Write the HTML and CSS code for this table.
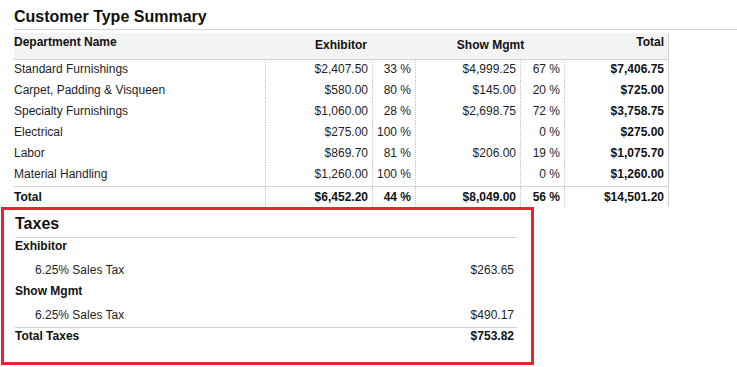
FILE: index.html
```html
<!DOCTYPE html>
<html lang="en">
<head>
<meta charset="utf-8">
<title>Customer Type Summary</title>
<link rel="stylesheet" href="styles.css">
</head>
<body>
<div class="page">
  <h2 class="title">Customer Type Summary</h2>
  <div class="summary">
    <div class="row head">
      <div class="cell h-top">Department Name</div>
      <div class="cell h-mid span2">Exhibitor</div>
      <div class="cell h-mid span2">Show Mgmt</div>
      <div class="cell h-top num last">Total</div>
    </div>
    <div class="row">
      <div class="cell name">Standard Furnishings</div>
      <div class="cell num">$2,407.50</div>
      <div class="cell num">33 %</div>
      <div class="cell num">$4,999.25</div>
      <div class="cell num">67 %</div>
      <div class="cell num bold last">$7,406.75</div>
    </div>
    <div class="row">
      <div class="cell name">Carpet, Padding &amp; Visqueen</div>
      <div class="cell num">$580.00</div>
      <div class="cell num">80 %</div>
      <div class="cell num">$145.00</div>
      <div class="cell num">20 %</div>
      <div class="cell num bold last">$725.00</div>
    </div>
    <div class="row">
      <div class="cell name">Specialty Furnishings</div>
      <div class="cell num">$1,060.00</div>
      <div class="cell num">28 %</div>
      <div class="cell num">$2,698.75</div>
      <div class="cell num">72 %</div>
      <div class="cell num bold last">$3,758.75</div>
    </div>
    <div class="row">
      <div class="cell name">Electrical</div>
      <div class="cell num">$275.00</div>
      <div class="cell num">100 %</div>
      <div class="cell num"></div>
      <div class="cell num">0 %</div>
      <div class="cell num bold last">$275.00</div>
    </div>
    <div class="row">
      <div class="cell name">Labor</div>
      <div class="cell num">$869.70</div>
      <div class="cell num">81 %</div>
      <div class="cell num">$206.00</div>
      <div class="cell num">19 %</div>
      <div class="cell num bold last">$1,075.70</div>
    </div>
    <div class="row">
      <div class="cell name">Material Handling</div>
      <div class="cell num">$1,260.00</div>
      <div class="cell num">100 %</div>
      <div class="cell num"></div>
      <div class="cell num">0 %</div>
      <div class="cell num bold last">$1,260.00</div>
    </div>
    <div class="row total">
      <div class="cell name bold">Total</div>
      <div class="cell num bold">$6,452.20</div>
      <div class="cell num bold">44 %</div>
      <div class="cell num bold">$8,049.00</div>
      <div class="cell num bold">56 %</div>
      <div class="cell num bold last">$14,501.20</div>
    </div>
  </div>

  <div class="taxes">
    <h3 class="taxes-title">Taxes</h3>
    <div class="tax-group">Exhibitor</div>
    <div class="tax-item">
      <span>6.25% Sales Tax</span>
      <span class="amt">$263.65</span>
    </div>
    <div class="tax-group">Show Mgmt</div>
    <div class="tax-item tax-item-last">
      <span>6.25% Sales Tax</span>
      <span class="amt">$490.17</span>
    </div>
    <div class="tax-total">
      <span>Total Taxes</span>
      <span class="amt">$753.82</span>
    </div>
  </div>
</div>
</body>
</html>
```

FILE: styles.css
```css
* { box-sizing: border-box; }

html, body {
  margin: 0;
  padding: 0;
  background: #ffffff;
}

body {
  font-family: "Liberation Sans", Arial, sans-serif;
  font-size: 12px;
  color: #1e1e1e;
  overflow: hidden;
}

.page {
  padding-left: 14px;
  padding-top: 8px;
}

.title {
  margin: 0 0 3px 0;
  font-size: 16px;
  line-height: 18px;
  font-weight: bold;
  color: #111;
  padding-bottom: 3px;
  border-bottom: 1px solid #d6d6d6;
}

.summary {
  width: 655px;
}

.row {
  display: grid;
  grid-template-columns: 252px 107px 43px 105px 44px 104px;
  height: 21px;
}

.row.head {
  height: 27px;
  background: #f3f3f3;
  border-bottom: 1px solid #d2d2d2;
}

.cell {
  line-height: 14px;
  padding: 2px 4px 0 0;
  white-space: nowrap;
  border-right: 1px dotted #c4c4c4;
}

.head .cell {
  border-right: none;
  font-weight: bold;
  color: #111;
}

.head .h-top { padding-top: 2px; }

.head .h-mid {
  padding-top: 5px;
  text-align: center;
  padding-right: 0;
}

.span2 { grid-column: span 2; }

.head .cell.last,
.cell.last {
  border-right: 1px solid #d2d2d2;
}

.num { text-align: right; }

.bold {
  font-weight: bold;
  color: #111;
}

.row.total {
  height: 21px;
  border-top: 1px solid #d2d2d2;
}

.row.total .cell { padding-top: 3px; }

.taxes {
  margin-left: -13px;
  width: 533px;
  height: 158px;
  border: 3px solid #e5262b;
  padding: 4px 14px 0 11px;
}

.taxes-title {
  margin: 0;
  font-size: 16px;
  line-height: 18px;
  font-weight: bold;
  color: #111;
  padding-top: 1px;
  padding-bottom: 4px;
  border-bottom: 1px solid #d2d2d2;
}

.tax-group {
  font-weight: bold;
  color: #111;
  line-height: 14px;
  padding: 1px 0 9px 0;
}

.tax-item {
  display: flex;
  justify-content: space-between;
  line-height: 14px;
  padding: 1px 3px 6px 20px;
}

.tax-item-last {
  padding-bottom: 5px;
  border-bottom: 1px solid #d2d2d2;
}

.tax-total {
  display: flex;
  justify-content: space-between;
  font-weight: bold;
  color: #111;
  line-height: 14px;
  padding: 1px 3px 0 0;
}
```
